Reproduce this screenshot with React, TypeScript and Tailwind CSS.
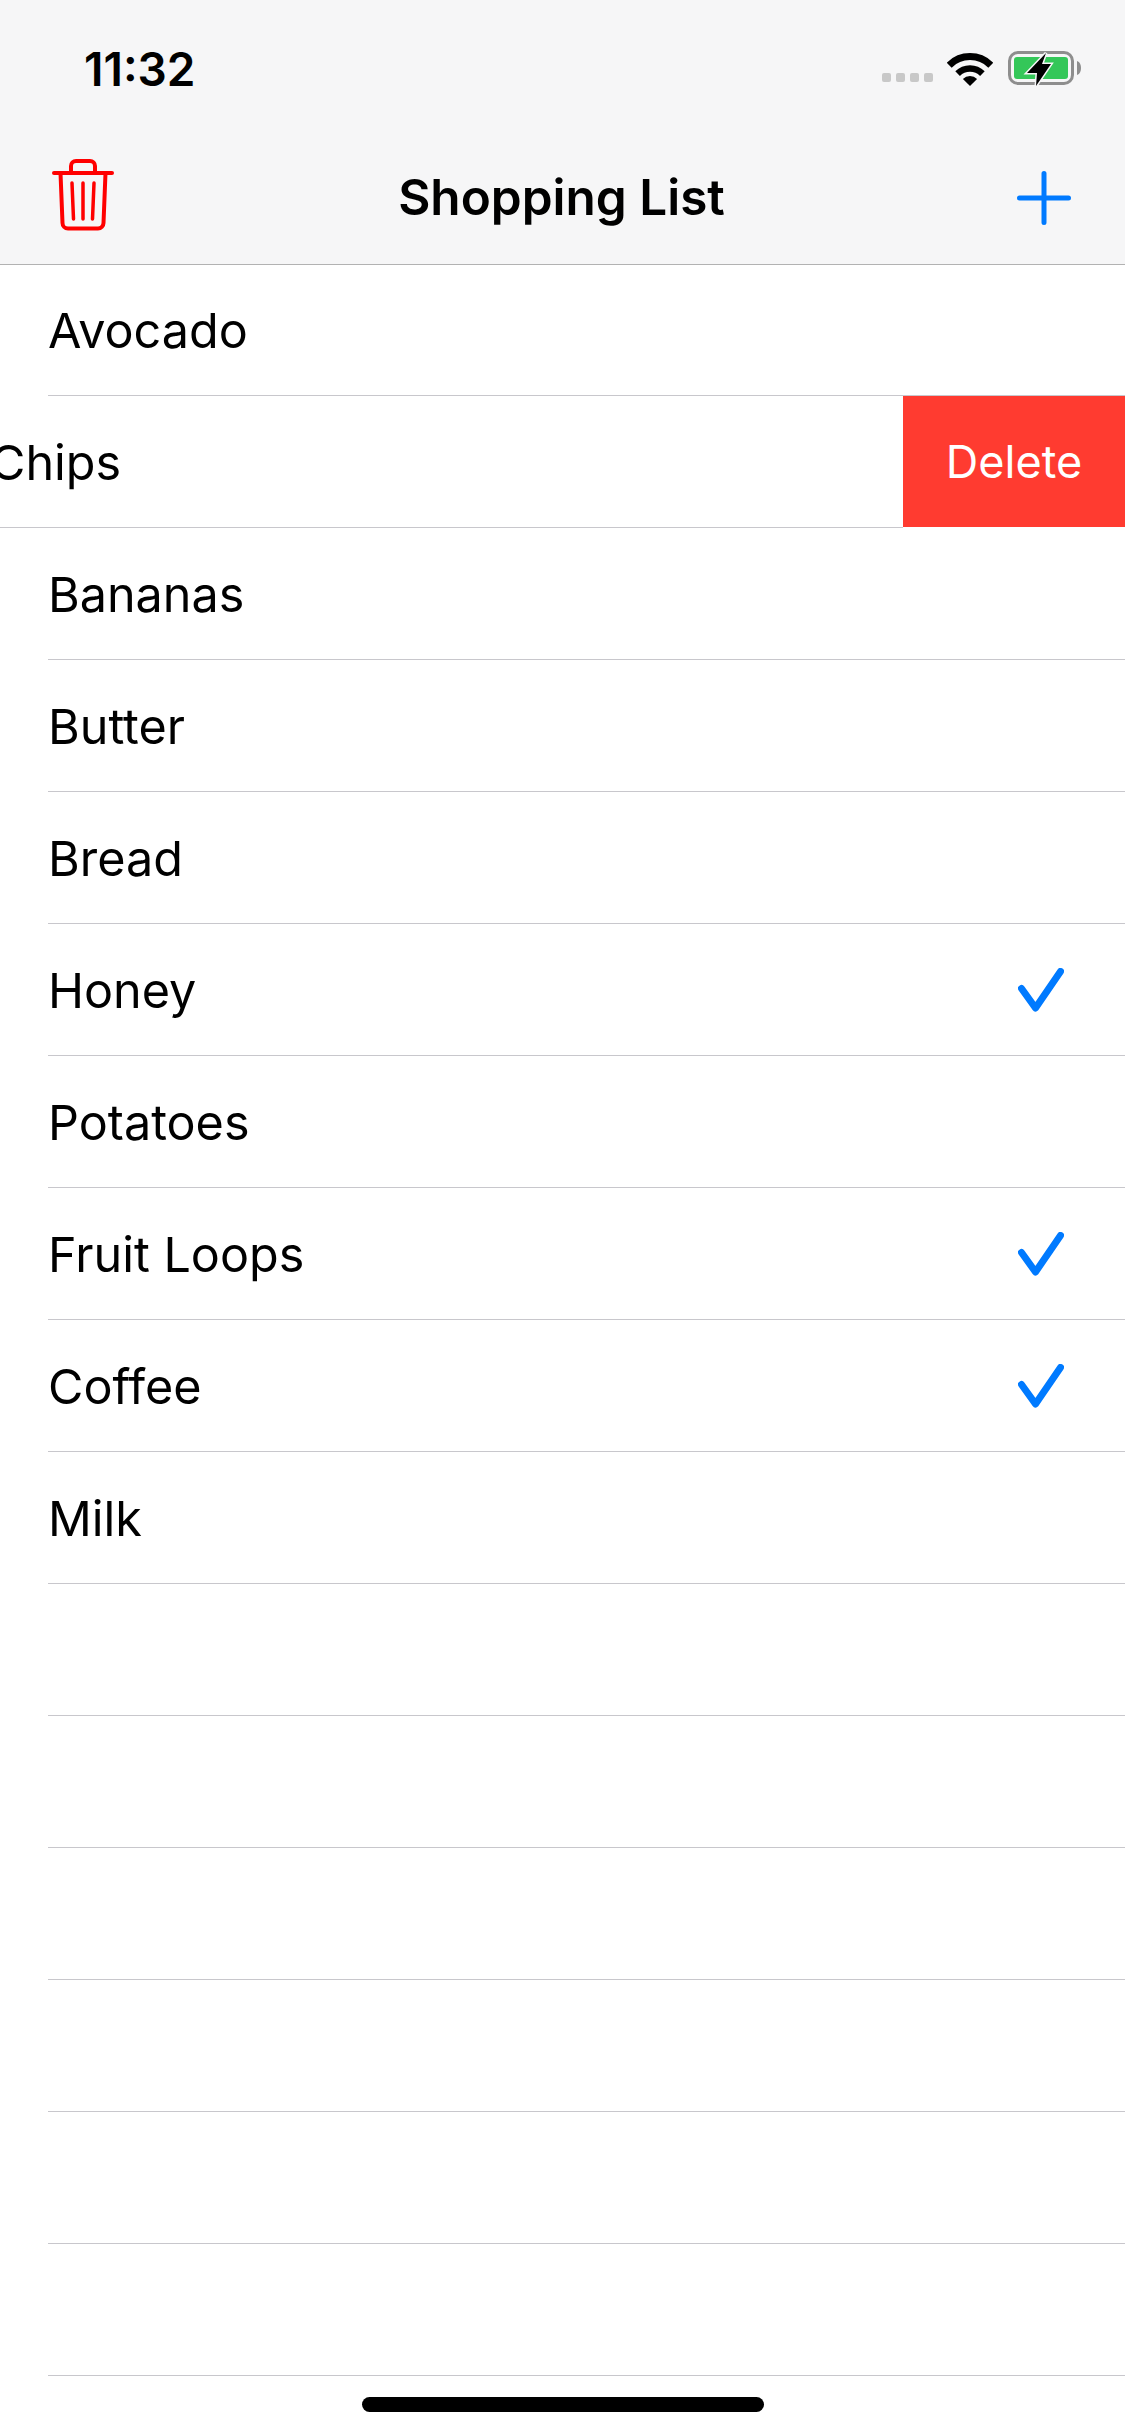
const items = [
  { name: "Avocado" },
  { name: "Chips", swiped: true },
  { name: "Bananas" },
  { name: "Butter" },
  { name: "Bread" },
  { name: "Honey", checked: true },
  { name: "Potatoes" },
  { name: "Fruit Loops", checked: true },
  { name: "Coffee", checked: true },
  { name: "Milk" },
  { name: "" },
  { name: "" },
  { name: "" },
  { name: "" },
  { name: "" },
  { name: "" },
];

function Wifi() {
  return (
    <svg width="46" height="33" viewBox="0 0 46 33" className="block">
      <path d="M2.2 12.2 A29.5 29.5 0 0 1 43.8 12.2" fill="none" stroke="#000" strokeWidth="7" />
      <path d="M10.6 20.6 A17.5 17.5 0 0 1 35.4 20.6" fill="none" stroke="#000" strokeWidth="6.5" />
      <path d="M23 33 L15.9 25.9 A10 10 0 0 1 30.1 25.9 Z" fill="#000" />
    </svg>
  );
}

function Battery() {
  return (
    <svg width="74" height="36" viewBox="0 0 74 36" className="block overflow-visible">
      <rect x="1.5" y="1.5" width="63" height="31" rx="8.5" fill="none" stroke="#8e8e8e" strokeWidth="3" />
      <rect x="6" y="6" width="54" height="22" rx="3" fill="#34c759" />
      <path d="M69 10 C72 11 73 14 73 17 C73 20 72 23 69 24 Z" fill="#8e8e8e" />
      <path
        d="M38 2 L19 22 L29 22 L28 35 L43 13 L34 13 Z"
        fill="#000"
        stroke="#f6f6f7"
        strokeWidth="3"
        paintOrder="stroke"
      />
    </svg>
  );
}

function Trash() {
  return (
    <svg width="62" height="72" viewBox="0 0 62 72" fill="none" stroke="#ff0000" strokeLinecap="round" className="-mt-[6px] block">
      <path d="M2 14 H60" strokeWidth="4" />
      <path d="M19 14 V7 a5 5 0 0 1 5-5 H38 a5 5 0 0 1 5 5 V14" strokeWidth="4" />
      <path d="M8.5 14 L10.5 64 a5.5 5.5 0 0 0 5.5 5.5 H46 a5.5 5.5 0 0 0 5.5-5.5 L53.5 14" strokeWidth="4" />
      <path d="M20 24 L21.5 60 M31 24 V60 M42 24 L40.5 60" strokeWidth="3.5" />
    </svg>
  );
}

function Plus() {
  return (
    <svg width="54" height="54" viewBox="0 0 54 54" stroke="#007aff" strokeWidth="5" strokeLinecap="round" className="block justify-self-end">
      <path d="M27 2.5 V51.5 M2.5 27 H51.5" />
    </svg>
  );
}

function Check() {
  return (
    <svg width="46" height="44" viewBox="0 0 46 44" fill="none" stroke="#007aff" strokeWidth="7" strokeLinecap="round" strokeLinejoin="round" className="block">
      <path d="M3.5 20.5 L17.5 40 L42.5 3.5" />
    </svg>
  );
}

export default function App() {
  return (
    <div className="relative flex h-[2436px] w-[1125px] flex-col overflow-hidden bg-white font-['Inter',sans-serif] text-black">
      <header className="relative z-10 h-[264px] shrink-0 bg-[#f6f6f7] shadow-[0_1px_0_#b2b2b2]">
        {/* Status bar */}
        <div className="flex h-[132px] items-center justify-between pl-[84px] pr-[43px] pt-[6px]">
          <span className="text-[46px] font-semibold leading-none">11:32</span>
          <div className="flex items-center">
            <div className="mt-[16px] flex gap-[5px]">
              <span className="h-[9px] w-[9px] rounded-[2px] bg-[#c8c8c8]" />
              <span className="h-[9px] w-[9px] rounded-[2px] bg-[#c8c8c8]" />
              <span className="h-[9px] w-[9px] rounded-[2px] bg-[#c8c8c8]" />
              <span className="h-[9px] w-[9px] rounded-[2px] bg-[#c8c8c8]" />
            </div>
            <div className="ml-[14px]">
              <Wifi />
            </div>
            <div className="ml-[15px]">
              <Battery />
            </div>
          </div>
        </div>

        {/* Nav bar */}
        <div className="grid h-[132px] grid-cols-[1fr_auto_1fr] items-center pl-[52px] pr-[54px]">
          <Trash />
          <h1 className="-mt-[1px] text-[49.5px] font-semibold leading-none">Shopping List</h1>
          <Plus />
        </div>
      </header>

      <div className="flex flex-col">
        {items.map((item, i) =>
          item.swiped ? (
            <div key={i} className="flex h-[132px] items-start overflow-hidden">
              <div className="flex h-[132px] flex-1 items-center border-b border-[#c8c7cc] pt-[3px]">
                <span className="-ml-[10px] text-[48.5px] leading-none">{item.name}</span>
              </div>
              <div className="flex h-[131px] w-[222px] items-center justify-center bg-[#ff3b30] text-[45px] text-white">
                Delete
              </div>
            </div>
          ) : (
            <div key={i} className="h-[132px] pl-[48px]">
              <div className="flex h-full items-center justify-between border-b border-[#c8c7cc] pr-[61px]">
                <span className="pt-[3px] text-[48.5px] leading-none">{item.name}</span>
                {item.checked && <Check />}
              </div>
            </div>
          ),
        )}
      </div>

      {/* Home indicator */}
      <div className="mt-[21px] flex justify-center">
        <div className="h-[15px] w-[402px] rounded-full bg-black" />
      </div>
    </div>
  );
}
